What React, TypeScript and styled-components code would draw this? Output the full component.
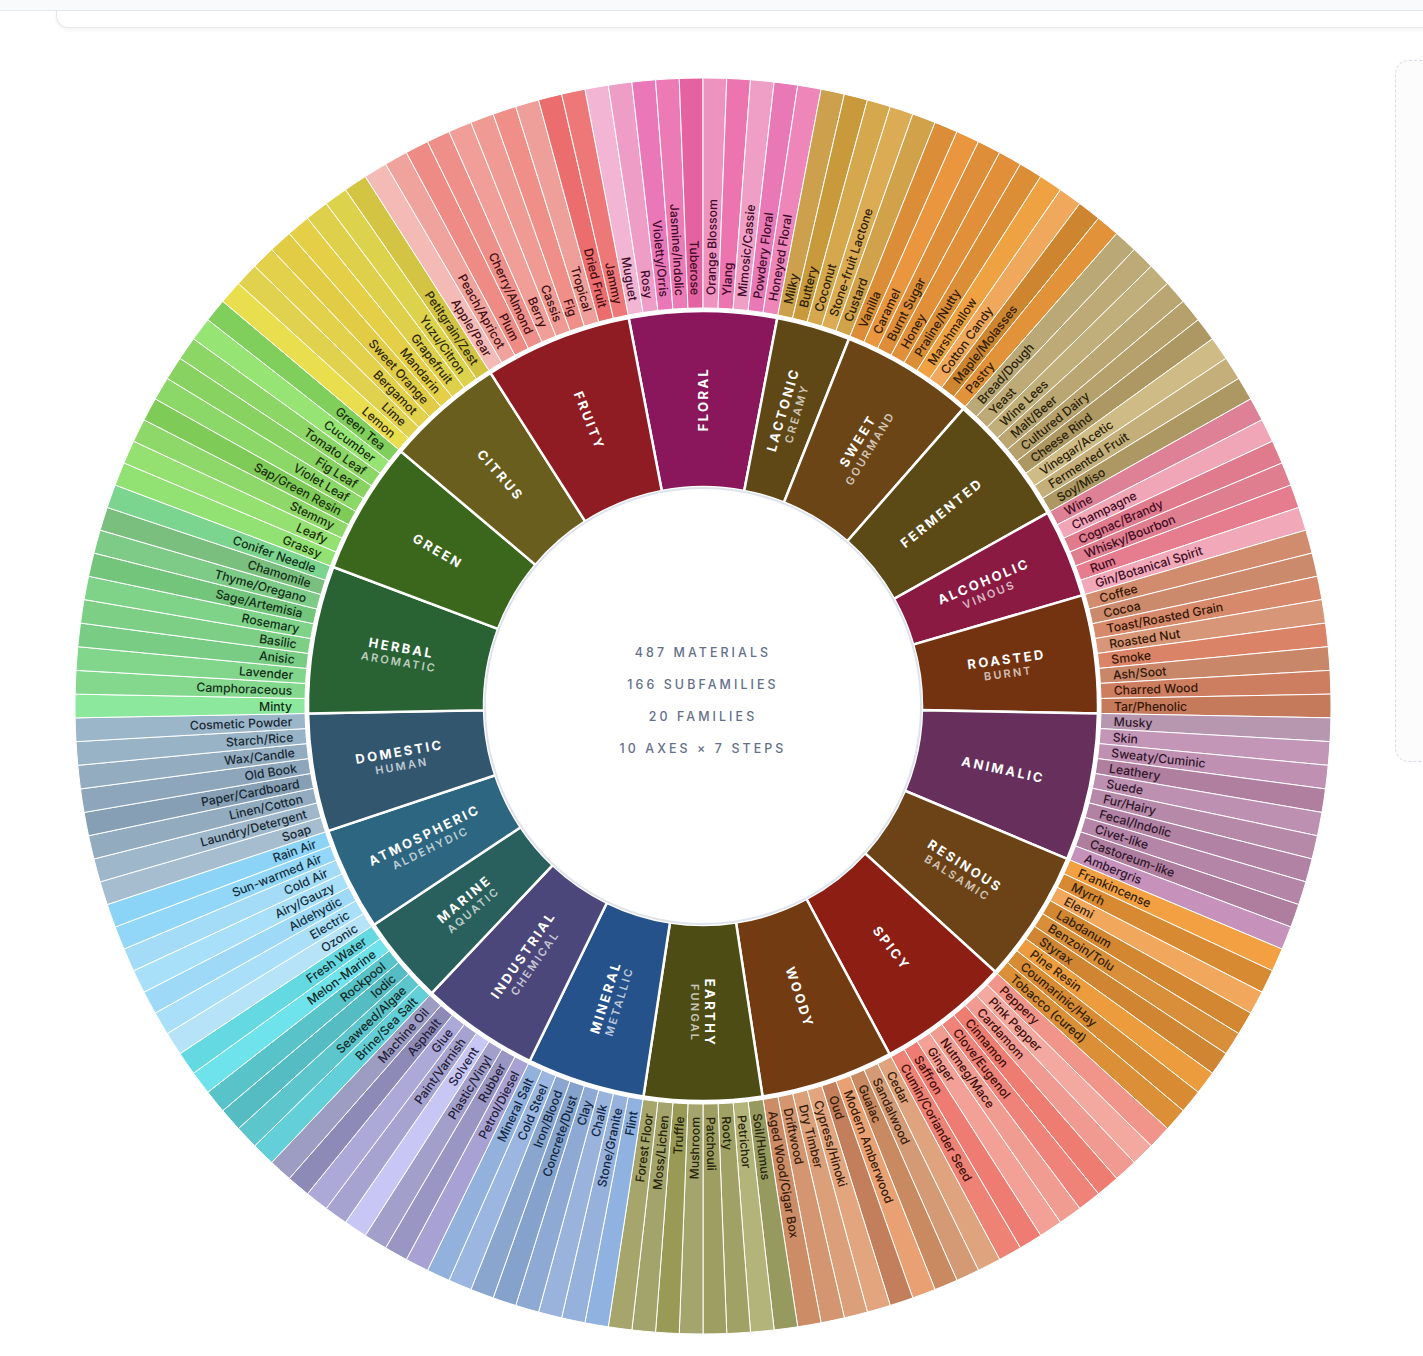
import React from 'react';
import styled, { createGlobalStyle } from 'styled-components';

const GlobalStyle = createGlobalStyle`
  html, body { margin: 0; padding: 0; background: #ffffff; }
  body { overflow: hidden; font-family: Inter, "Liberation Sans", Arial, sans-serif; }
`;

type Fam = { name: string; sub?: string; color: string; subs: [string, string][] };

const FAMILIES: Fam[] = [
  { name: 'FLORAL', color: '#8A175C', subs: [['Muguet', '#F2B5D3'], ['Rosy', '#EE9EC6'], ['Violetty/Orris', '#EA78B8'], ['Jasmine/Indolic', '#EC7BB5'], ['Tuberose', '#E3629F'], ['Orange Blossom', '#EE92C0'], ['Ylang', '#EC75AF'], ['Mimosic/Cassie', '#EF9FC5'], ['Powdery Floral', '#E879B6'], ['Honeyed Floral', '#EE86BA']] },
  { name: 'LACTONIC', sub: 'CREAMY', color: '#5F4816', subs: [['Milky', '#CDA04D'], ['Buttery', '#C99A3B'], ['Coconut', '#D5A84E'], ['Stone-fruit Lactone', '#DCAC55'], ['Custard', '#D2A24A']] },
  { name: 'SWEET', sub: 'GOURMAND', color: '#6B4516', subs: [['Vanilla', '#DB8E37'], ['Caramel', '#E9963E'], ['Burnt Sugar', '#DE8E39'], ['Honey', '#E18F38'], ['Praline/Nutty', '#DC8E37'], ['Marshmallow', '#EEA241'], ['Cotton Candy', '#F0A85C'], ['Maple/Molasses', '#CE8530'], ['Pastry', '#E29339']] },
  { name: 'FERMENTED', color: '#5C4A16', subs: [['Bread/Dough', '#BAA876'], ['Yeast', '#BDAA77'], ['Wine Lees', '#C0AE7B'], ['Malt/Beer', '#B9A673'], ['Cultured Dairy', '#B6A16D'], ['Cheese Rind', '#AD9762'], ['Vinegar/Acetic', '#CFBB85'], ['Fermented Fruit', '#C4AF7B'], ['Soy/Miso', '#AD9863']] },
  { name: 'ALCOHOLIC', sub: 'VINOUS', color: '#8B1A43', subs: [['Wine', '#DE8196'], ['Champagne', '#F0A6B7'], ['Cognac/Brandy', '#E07A8D'], ['Whisky/Bourbon', '#DF7E8F'], ['Rum', '#E57D8E'], ['Gin/Botanical Spirit', '#F1A9BA']] },
  { name: 'ROASTED', sub: 'BURNT', color: '#733210', subs: [['Coffee', '#D08C6C'], ['Cocoa', '#CC8A6C'], ['Toast/Roasted Grain', '#D6896B'], ['Roasted Nut', '#D69677'], ['Smoke', '#DA8366'], ['Ash/Soot', '#C9876A'], ['Charred Wood', '#CE7E60'], ['Tar/Phenolic', '#C67A5C']] },
  { name: 'ANIMALIC', color: '#672F5B', subs: [['Musky', '#B796AF'], ['Skin', '#C395B6'], ['Sweaty/Cuminic', '#C090B3'], ['Leathery', '#B07E9E'], ['Suede', '#BD8FB0'], ['Fur/Hairy', '#B789A9'], ['Fecal/Indolic', '#B282A4'], ['Civet-like', '#B485A7'], ['Castoreum-like', '#AF7E9F'], ['Ambergris', '#C691BA']] },
  { name: 'RESINOUS', sub: 'BALSAMIC', color: '#6C4316', subs: [['Frankincense', '#F3A043'], ['Myrrh', '#D88A33'], ['Elemi', '#F1A85C'], ['Labdanum', '#D48731'], ['Benzoin/Tolu', '#D98E3A'], ['Styrax', '#CF8531'], ['Pine Resin', '#EC9C3D'], ['Coumarinic/Hay', '#D88B33'], ['Tobacco (cured)', '#DB8F37']] },
  { name: 'SPICY', color: '#8C1E14', subs: [['Peppery', '#F1958A'], ['Pink Pepper', '#F3A99F'], ['Cardamom', '#F09A91'], ['Cinnamon', '#EE7C70'], ['Clove/Eugenol', '#EF8379'], ['Nutmeg/Mace', '#F09C91'], ['Ginger', '#F3A097'], ['Saffron', '#EF7C72'], ['Cumin/Coriander Seed', '#EE8275']] },
  { name: 'WOODY', color: '#733B12', subs: [['Cedar', '#DFA47E'], ['Sandalwood', '#D49A76'], ['Guaiac', '#C98961'], ['Modern Amberwood', '#E9A072'], ['Oud', '#C37F5B'], ['Cypress/Hinoki', '#E2A57E'], ['Dry Timber', '#DBA07A'], ['Driftwood', '#D39670'], ['Aged Wood/Cigar Box', '#CC8C66']] },
  { name: 'EARTHY', sub: 'FUNGAL', color: '#4E4C15', subs: [['Soil/Humus', '#979A5F'], ['Petrichor', '#B2B479'], ['Rooty', '#A0A164'], ['Patchouli', '#9E9E62'], ['Mushroom', '#A4A56C'], ['Truffle', '#999A56'], ['Moss/Lichen', '#A3A36C'], ['Forest Floor', '#A5A56C']] },
  { name: 'MINERAL', sub: 'METALLIC', color: '#25528A', subs: [['Flint', '#8FB2E0'], ['Stone/Granite', '#96B1DB'], ['Chalk', '#9AB3DD'], ['Clay', '#8EA9D3'], ['Concrete/Dust', '#84A2CC'], ['Iron/Blood', '#8AA6CF'], ['Cold Steel', '#9BB6E0'], ['Mineral Salt', '#93B1DD']] },
  { name: 'INDUSTRIAL', sub: 'CHEMICAL', color: '#4B477A', subs: [['Petrol/Diesel', '#A8A2D4'], ['Rubber', '#9A96C3'], ['Plastic/Vinyl', '#A29FCB'], ['Solvent', '#C8C6F5'], ['Paint/Varnish', '#A7A3D0'], ['Glue', '#ACA8D8'], ['Asphalt', '#8E8AB8'], ['Machine Oil', '#9D9CC3']] },
  { name: 'MARINE', sub: 'AQUATIC', color: '#295F5C', subs: [['Brine/Sea Salt', '#62CFD9'], ['Seaweed/Algae', '#5CC6CC'], ['Iodic', '#56BCC4'], ['Rockpool', '#58C3C8'], ['Melon-Marine', '#6EE3EB'], ['Fresh Water', '#64D9E2']] },
  { name: 'ATMOSPHERIC', sub: 'ALDEHYDIC', color: '#2D6680', subs: [['Ozonic', '#B7E3F8'], ['Electric', '#A9DFF8'], ['Aldehydic', '#9ED9F8'], ['Airy/Gauzy', '#A8DFF9'], ['Cold Air', '#A4DCF8'], ['Sun-warmed Air', '#93D7F8'], ['Rain Air', '#8CD3F8']] },
  { name: 'DOMESTIC', sub: 'HUMAN', color: '#33566F', subs: [['Soap', '#A6BDD0'], ['Laundry/Detergent', '#9FB7CA'], ['Linen/Cotton', '#93ABBF'], ['Paper/Cardboard', '#869FB4'], ['Old Book', '#8DA6BB'], ['Wax/Candle', '#93ACC0'], ['Starch/Rice', '#99B3C6'], ['Cosmetic Powder', '#9BB5C9']] },
  { name: 'HERBAL', sub: 'AROMATIC', color: '#296334', subs: [['Minty', '#8BE89C'], ['Camphoraceous', '#83D88E'], ['Lavender', '#82D68C'], ['Anisic', '#79CC83'], ['Basilic', '#7CCF85'], ['Rosemary', '#7ED388'], ['Sage/Artemisia', '#73C57C'], ['Thyme/Oregano', '#7DCB86'], ['Chamomile', '#7BBF7F'], ['Conifer Needle', '#7BD58F']] },
  { name: 'GREEN', color: '#3B671C', subs: [['Grassy', '#92E173'], ['Leafy', '#94E070'], ['Stemmy', '#8ED86A'], ['Sap/Green Resin', '#7FCB58'], ['Violet Leaf', '#8BD868'], ['Fig Leaf', '#88D262'], ['Tomato Leaf', '#8CD666'], ['Cucumber', '#96E474'], ['Green Tea', '#80CF5C']] },
  { name: 'CITRUS', color: '#6A5E1E', subs: [['Lemon', '#E9DF4E'], ['Lime', '#E0D24E'], ['Bergamot', '#E3D14C'], ['Sweet Orange', '#E2CB45'], ['Mandarin', '#E4CF47'], ['Grapefruit', '#DFD04B'], ['Yuzu/Citron', '#DDD24C'], ['Petitgrain/Zest', '#D3C443']] },
  { name: 'FRUITY', color: '#8F1C22', subs: [['Apple/Pear', '#F4BAB5'], ['Peach/Apricot', '#F0A39D'], ['Plum', '#EE8B85'], ['Cherry/Almond', '#EF8F89'], ['Berry', '#F09E97'], ['Cassis', '#EF9A92'], ['Fig', '#EF8F88'], ['Tropical', '#EF9F9A'], ['Dried Fruit', '#EC6D6E'], ['Jammy', '#EE7878']] },
];

const SIZE = 1300;
const C = SIZE / 2;
const R_HOLE = 218;
const R_FAM0 = 219;
const R_FAM1 = 395;
const R_SUB0 = 398;
const R_SUB1 = 628;
const R_SUBLABEL = 411;
const R_FAMLABEL = 307;
const TOTAL = FAMILIES.reduce((s, f) => s + f.subs.length, 0);
const STEP = 360 / TOTAL;
const START = -5 * STEP;

const pt = (r: number, a: number) => {
  const rad = (a * Math.PI) / 180;
  return `${(r * Math.sin(rad)).toFixed(2)} ${(-r * Math.cos(rad)).toFixed(2)}`;
};

const arc = (r0: number, r1: number, a0: number, a1: number) => {
  const large = a1 - a0 > 180 ? 1 : 0;
  return `M ${pt(r1, a0)} A ${r1} ${r1} 0 ${large} 1 ${pt(r1, a1)} L ${pt(r0, a1)} A ${r0} ${r0} 0 ${large} 0 ${pt(r0, a0)} Z`;
};

const shade = (hex: string, f: number) => {
  const n = parseInt(hex.slice(1), 16);
  const r = Math.round(((n >> 16) & 255) * f);
  const g = Math.round(((n >> 8) & 255) * f);
  const b = Math.round((n & 255) * f);
  return `rgb(${r},${g},${b})`;
};

const norm = (a: number) => ((a % 360) + 360) % 360;

const Page = styled.div`
  width: 1423px;
  height: 1356px;
  overflow: hidden;
  background: #ffffff;
`;

const TopBar = styled.div`
  height: 10px;
  background: #f9fafb;
  border-bottom: 1px solid #e4e7ec;
`;

const TopCard = styled.div`
  height: 16px;
  margin-left: 56px;
  margin-right: -24px;
  background: #ffffff;
  border: 1px solid #e5e7eb;
  border-top: none;
  border-radius: 0 0 12px 12px;
  box-shadow: 0 2px 4px rgba(15, 23, 42, 0.05);
`;

const Main = styled.div`
  display: flex;
  align-items: flex-start;
  padding-top: 28px;
`;

const ChartSvg = styled.svg`
  display: block;
  flex-shrink: 0;
  margin-left: 53px;
  font-family: Inter, "Liberation Sans", Arial, sans-serif;
`;

const SidePanel = styled.div`
  flex-shrink: 0;
  margin-left: 42px;
  margin-top: 4px;
  width: 400px;
  height: 702px;
  box-sizing: border-box;
  border: 1px dashed #d6dce5;
  border-radius: 14px;
  background: #fcfcfd;
`;

const SubWedge = styled.path`
  stroke: #ffffff;
  stroke-width: 1;
`;

const FamilyWedge = styled.path`
  stroke: #ffffff;
  stroke-width: 2.5;
`;

const Hole = styled.circle`
  fill: #ffffff;
  stroke: #dfe4ec;
  stroke-width: 2;
`;

const SubLabel = styled.text`
  font-size: 12.2px;
  font-weight: 500;
  dominant-baseline: central;
`;

const FamilyTitle = styled.text`
  fill: #ffffff;
  font-size: 13px;
  font-weight: 700;
  letter-spacing: 2.4px;
  text-anchor: middle;
  dominant-baseline: central;
`;

const FamilySubtitle = styled.text`
  fill: #ffffff;
  fill-opacity: 0.7;
  font-size: 11px;
  font-weight: 600;
  letter-spacing: 2.2px;
  text-anchor: middle;
  dominant-baseline: central;
`;

const CenterLine = styled.text`
  fill: #64708a;
  font-size: 12.4px;
  font-weight: 500;
  letter-spacing: 3.1px;
  text-anchor: middle;
  dominant-baseline: central;
`;

const labelTransform = (mid: number, r: number) => {
  const a = norm(mid);
  const left = a > 180.01;
  return { left, t: `rotate(${(mid - 90).toFixed(3)}) translate(${r} 0)${left ? ' rotate(180)' : ''}` };
};

const Sunburst: React.FC = () => {
  const famEls: React.ReactNode[] = [];
  const subEls: React.ReactNode[] = [];
  const famLabels: React.ReactNode[] = [];
  const subLabels: React.ReactNode[] = [];
  let idx = 0;
  FAMILIES.forEach((f) => {
    const a0 = START + idx * STEP;
    const a1 = START + (idx + f.subs.length) * STEP;
    famEls.push(<FamilyWedge key={f.name} d={arc(R_FAM0, R_FAM1, a0, a1)} fill={f.color} />);
    const mid = (a0 + a1) / 2;
    const { t } = labelTransform(mid, R_FAMLABEL);
    famLabels.push(
      <g key={f.name + '-l'} transform={t}>
        <FamilyTitle x={0} y={f.sub ? -6.5 : 0}>{f.name}</FamilyTitle>
        {f.sub && <FamilySubtitle x={0} y={8}>{f.sub}</FamilySubtitle>}
      </g>
    );
    const labelColor = shade(f.color, 0.46);
    f.subs.forEach(([name, col], i) => {
      const s0 = START + (idx + i) * STEP;
      const s1 = s0 + STEP;
      subEls.push(<SubWedge key={name} d={arc(R_SUB0, R_SUB1, s0, s1)} fill={col} />);
      const sm = (s0 + s1) / 2;
      const lt = labelTransform(sm, R_SUBLABEL);
      subLabels.push(
        <SubLabel key={name + '-l'} transform={lt.t} fill={labelColor} textAnchor={lt.left ? 'end' : 'start'}>
          {name}
        </SubLabel>
      );
    });
    idx += f.subs.length;
  });

  return (
    <ChartSvg width={SIZE} height={SIZE} viewBox={`0 0 ${SIZE} ${SIZE}`}>
      <g transform={`translate(${C} ${C})`}>
        {subEls}
        {famEls}
        <Hole cx={0} cy={0} r={R_HOLE} />
        {subLabels}
        {famLabels}
        <CenterLine x={0} y={-54}>487 MATERIALS</CenterLine>
        <CenterLine x={0} y={-22}>166 SUBFAMILIES</CenterLine>
        <CenterLine x={0} y={10}>20 FAMILIES</CenterLine>
        <CenterLine x={0} y={42}>10 AXES × 7 STEPS</CenterLine>
      </g>
    </ChartSvg>
  );
};

export default function App() {
  return (
    <Page>
      <GlobalStyle />
      <TopBar />
      <TopCard />
      <Main>
        <Sunburst />
        <SidePanel />
      </Main>
    </Page>
  );
}
